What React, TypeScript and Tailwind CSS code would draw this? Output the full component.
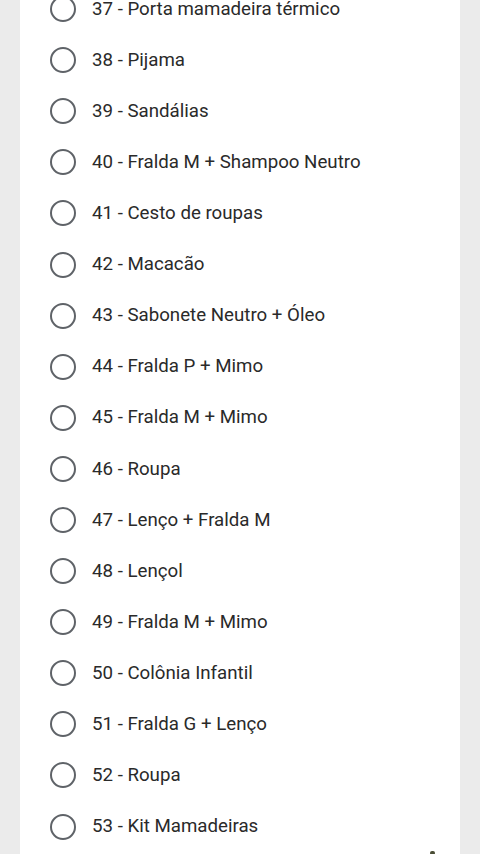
const items = [
  "37 - Porta mamadeira térmico",
  "38 - Pijama",
  "39 - Sandálias",
  "40 - Fralda M + Shampoo Neutro",
  "41 - Cesto de roupas",
  "42 - Macacão",
  "43 - Sabonete Neutro + Óleo",
  "44 - Fralda P + Mimo",
  "45 - Fralda M + Mimo",
  "46 - Roupa",
  "47 - Lenço + Fralda M",
  "48 - Lençol",
  "49 - Fralda M + Mimo",
  "50 - Colônia Infantil",
  "51 - Fralda G + Lenço",
  "52 - Roupa",
  "53 - Kit Mamadeiras",
];

export default function App() {
  return (
    <div className="relative h-[854px] w-[480px] overflow-hidden bg-[#ebebeb] font-['Roboto',sans-serif]">
      <div className="mx-[20px] mt-[-16.5px] h-[900px] bg-white pl-[30px]">
        {items.map((label) => (
          <label key={label} className="flex h-[51.1px] items-center gap-[16px]">
            <span className="h-[26px] w-[26px] shrink-0 rounded-full border-2 border-[#5f6368]" />
            <span className="text-[18.7px] leading-none text-[#2a2a2a]">{label}</span>
          </label>
        ))}
      </div>
      <span className="absolute left-[430px] top-[851px] h-[4px] w-[5px] rounded-full bg-[#4a4d35]" />
    </div>
  );
}
